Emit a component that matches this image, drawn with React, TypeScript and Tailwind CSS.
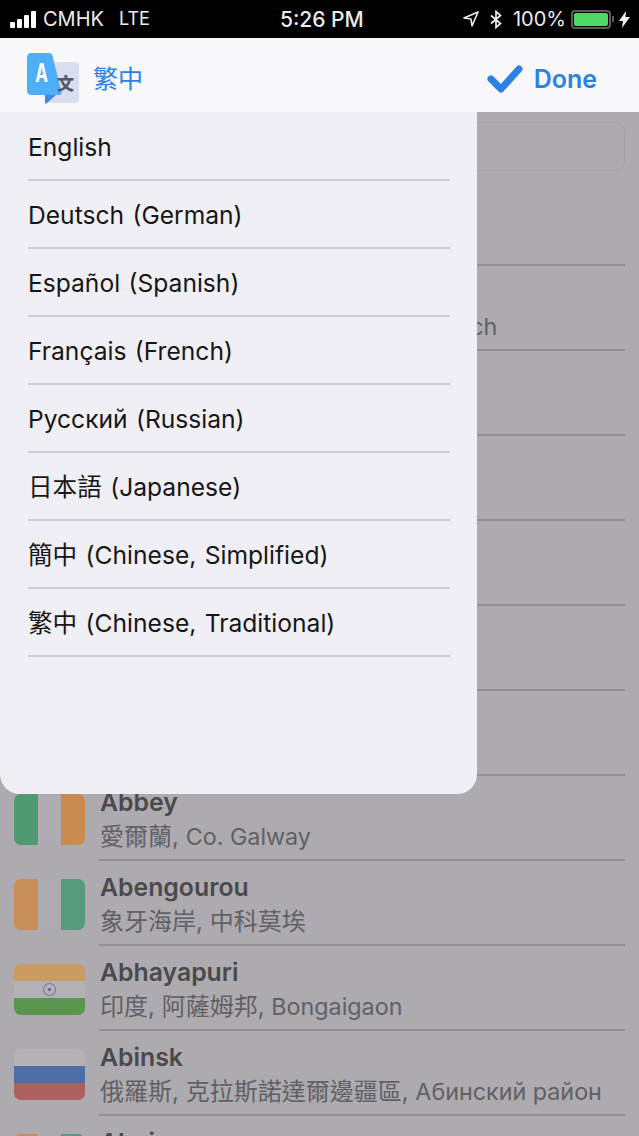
const LANGS = [
  "English",
  "Deutsch (German)",
  "Español (Spanish)",
  "Français (French)",
  "Русский (Russian)",
  "日本語 (Japanese)",
  "簡中 (Chinese, Simplified)",
  "繁中 (Chinese, Traditional)",
];

type Flag = "none" | "ie" | "ci" | "in" | "ru";

// sub is the Chinese part, latin the rest: the two need slightly different sizes
const PLACES: { name: string; sub: string; latin: string; flag: Flag }[] = [
  { name: "", sub: "", latin: "", flag: "none" },
  { name: "", sub: "瑞士聯邦, 阿爾高州, ", latin: "Bezirks Zurzach", flag: "none" },
  { name: "", sub: "", latin: "", flag: "none" },
  { name: "", sub: "", latin: "", flag: "none" },
  { name: "", sub: "", latin: "", flag: "none" },
  { name: "", sub: "", latin: "", flag: "none" },
  { name: "", sub: "", latin: "", flag: "none" },
  { name: "Abbey", sub: "愛爾蘭, ", latin: "Co. Galway", flag: "ie" },
  { name: "Abengourou", sub: "象牙海岸, 中科莫埃", latin: "", flag: "ci" },
  { name: "Abhayapuri", sub: "印度, 阿薩姆邦, ", latin: "Bongaigaon", flag: "in" },
  { name: "Abinsk", sub: "俄羅斯, 克拉斯諾達爾邊疆區, ", latin: "Абинский район", flag: "ru" },
  { name: "Aboisso", sub: "", latin: "", flag: "ci" },
];

function FlagIcon({ flag }: { flag: Flag }) {
  if (flag === "none") return <div className="mt-px h-[51px] w-[71px] shrink-0" />;
  if (flag === "ie" || flag === "ci") {
    return (
      <div className="mt-px flex h-[51px] w-[71px] shrink-0 overflow-hidden rounded-[7px]">
        <div className={flag === "ie" ? "w-6 bg-[#4f9a73]" : "w-6 bg-[#c98f5a]"} />
        <div className="w-[23px] bg-[#aeacb0]" />
        <div className={flag === "ie" ? "w-6 bg-[#c98b4f]" : "w-6 bg-[#569b7d]"} />
      </div>
    );
  }
  if (flag === "in") {
    return (
      <div className="mt-px flex h-[51px] w-[71px] shrink-0 flex-col overflow-hidden rounded-[7px]">
        <div className="h-[17px] bg-[#c99c63]" />
        <div className="flex h-[17px] items-center justify-center bg-[#b3b1b5]">
          <div className="flex h-[13px] w-[13px] items-center justify-center rounded-full border border-[#6d6d9c]">
            <div className="h-[3px] w-[3px] rounded-full bg-[#5a5a8c]" />
          </div>
        </div>
        <div className="h-[17px] bg-[#5a9650]" />
      </div>
    );
  }
  return (
    <div className="mt-px flex h-[51px] w-[71px] shrink-0 flex-col overflow-hidden rounded-[7px]">
      <div className="h-[17px] bg-[#b3b1b5]" />
      <div className="h-[17px] bg-[#4f6ea5]" />
      <div className="h-[17px] bg-[#ae6060]" />
    </div>
  );
}

function StatusBar() {
  return (
    <div className="flex h-[38px] items-center bg-black pl-[10px] pr-[9px] text-[20px] leading-none text-[#ececec]">
      <div className="flex w-[270px] items-center">
        <div className="flex items-end gap-[2px]">
          <div className="h-[6px] w-[5px] rounded-[1px] bg-white" />
          <div className="h-[9px] w-[5px] rounded-[1px] bg-white" />
          <div className="h-[13px] w-[5px] rounded-[1px] bg-white" />
          <div className="h-[17px] w-[5px] rounded-[1px] bg-white" />
        </div>
        <span className="ml-[7px]">CMHK</span>
        <span className="ml-[15px] text-[18px]">LTE</span>
      </div>
      <span className="text-[21px] font-medium">5:26 PM</span>
      <div className="ml-auto flex items-center">
        <svg width="16" height="16" viewBox="0 0 16 16" className="mr-[11px]" fill="none">
          <path d="M15 1 1 7l7 1 1 7z" stroke="#ececec" strokeWidth="1.6" strokeLinejoin="round" />
        </svg>
        <svg width="12" height="19" viewBox="0 0 12 19" className="mr-[11px]" fill="none">
          <path d="M1 5.500 10.500 13.500 6 17.500V1.500l4.500 4L1 13.500" stroke="#ececec" strokeWidth="1.7" />
        </svg>
        <span>100%</span>
        <div className="ml-[5px] flex h-[19px] w-10 items-center rounded-[4px] border-2 border-[#5a5a5a] p-[1px]">
          <div className="h-full w-full rounded-[2px] bg-[#4cd964]" />
        </div>
        <div className="ml-[1px] h-[6px] w-[2px] bg-[#5a5a5a]" />
        <svg width="11" height="17" viewBox="0 0 11 17" className="ml-[5px]">
          <path d="M7 0 0 10h4l-1 7 8-11H6.500z" fill="#f2f2f2" />
        </svg>
      </div>
    </div>
  );
}

function TranslateIcon() {
  return (
    <svg width="52" height="54" viewBox="0 -1 52 54">
      <rect x="18" y="9" width="34" height="41" rx="4" fill="#d9dfee" />
      <path d="M4 0h18c2 0 3 1 3.500 3l9 36c.5 2-1 3-2.500 3H4c-2 0-4-2-4-4V4c0-2 2-4 4-4z" fill="#4eaef8" />
      <path d="M18 42h11l-9 8c-1 1-2 .5-2-1z" fill="#3f86e8" />
      <g transform="translate(14.500 29) scale(0.68 1)">
        <text x="0" y="0" textAnchor="middle" fontSize="25" fontWeight="700" fill="#ffffff" fontFamily="Inter, sans-serif">A</text>
      </g>
      <text x="38.500" y="37" textAnchor="middle" fontSize="17" fontWeight="900" fill="#555a66" fontFamily="'Noto Sans CJK TC', sans-serif">文</text>
    </svg>
  );
}

export default function App() {
  return (
    <div className="h-[1136px] w-[639px] overflow-hidden bg-[#adabaf] font-['Inter','Noto_Sans_CJK_TC',sans-serif]">
      <StatusBar />
      <header className="flex h-[74px] items-center justify-between bg-[#f8f8fa] pl-[27px] pr-[42px] pt-2">
        <div className="flex items-center gap-[14px]">
          <TranslateIcon />
          <span className="text-[25px] leading-none text-[#2b82e4]">繁中</span>
        </div>
        <div className="flex items-center gap-[11px]">
          <svg width="36" height="28" viewBox="0 0 36 28" fill="none">
            <path d="M4 14l10 10L32 4" stroke="#2b82e4" strokeWidth="7" strokeLinecap="round" strokeLinejoin="round" />
          </svg>
          <span className="text-[25px] font-semibold leading-none text-[#2b82e4]">Done</span>
        </div>
      </header>

      <div className="relative">
        <div className="flex h-[69px] items-start px-[14px] pt-[10px]">
          <div className="h-[49px] w-full rounded-[10px] border border-[#a4a2a6]" />
        </div>
        {PLACES.map((p, i) => (
          <div key={i} className="flex h-[85px] items-center gap-[14px] pl-[14px]">
            <FlagIcon flag={p.flag} />
            <div className="mr-[14px] flex h-full min-w-0 flex-1 flex-col border-b-2 border-[#929094] pl-px">
              <div className="mt-[10px] h-8 text-[24.8px] font-semibold leading-[32px] text-[#4a494c]">{p.name}</div>
              <div className="mt-[3px] h-8 whitespace-nowrap text-[24px] leading-[32px] text-[#616064]">
                {p.sub}
                <span className="text-[23.3px]">{p.latin}</span>
              </div>
            </div>
          </div>
        ))}

        <div className="absolute left-0 top-0 h-[682px] w-[477px] rounded-b-[20px] bg-[#f0eff5] pl-[28px] pr-[27px] pt-px">
          {LANGS.map((l) => (
            <div key={l} className="flex h-[68px] items-center border-b-2 border-[#cbcacf] pt-[3px] text-[24.6px] [word-spacing:1.5px] text-[#161616]">
              {l}
            </div>
          ))}
        </div>
      </div>
    </div>
  );
}
